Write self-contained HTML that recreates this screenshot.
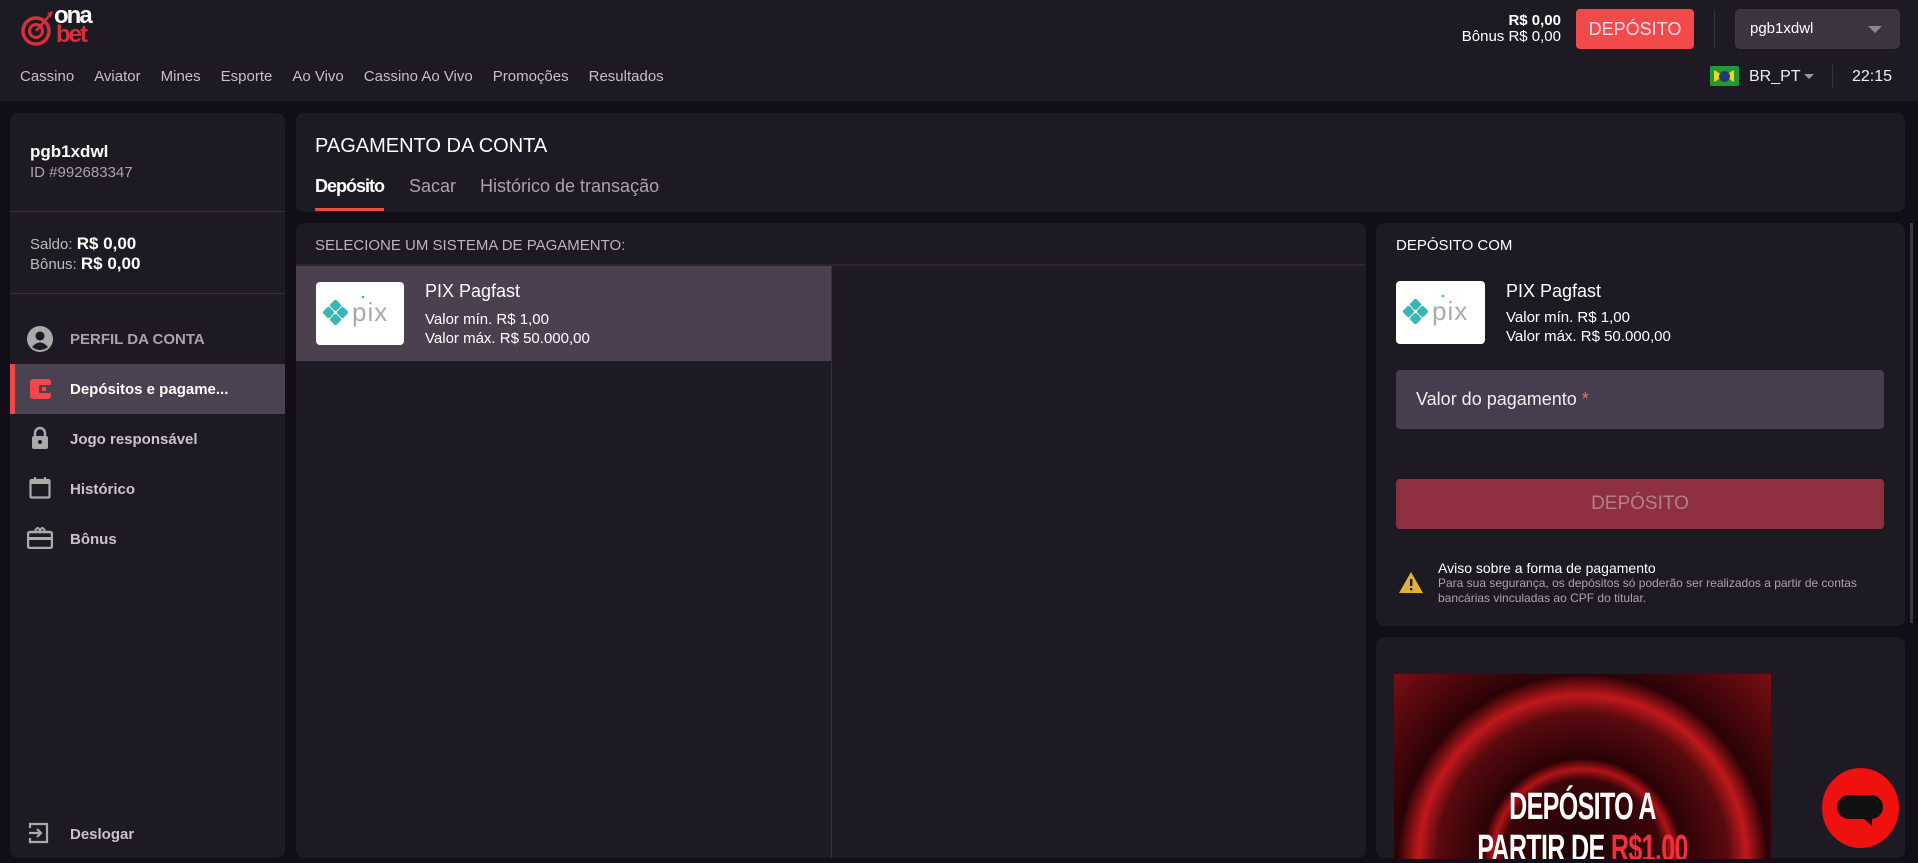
<!DOCTYPE html>
<html><head><meta charset="utf-8"><style>
*{box-sizing:border-box;margin:0;padding:0}
body{width:1918px;height:863px;overflow:hidden;background:#120e17;font-family:"Liberation Sans",sans-serif;color:#fff;position:relative}
.a{position:absolute}
.panel{position:absolute;background:#1e1a23;border-radius:8px}
.nav span{margin-right:20px}
.pix{position:absolute;background:#fff;border-radius:4px}
</style></head><body>
<div class="a" style="left:0;top:0;width:1918px;height:101px;background:#1e1a23"></div>
<svg class="a" style="left:18px;top:9px" width="42" height="38" viewBox="0 0 42 38">
<circle cx="18" cy="22" r="13" fill="none" stroke="#d6313b" stroke-width="3.5"/>
<circle cx="18" cy="22" r="6.5" fill="none" stroke="#d6313b" stroke-width="3"/>
<path d="M18 22 L32 6" stroke="#d6313b" stroke-width="2.5"/><path d="M29 4 l6 -2 l-2 6z" fill="#d6313b"/>
</svg>
<div class="a" style="left:54px;top:6px;font-size:24px;font-weight:bold;letter-spacing:-2px;line-height:20px;color:#fff">ona</div>
<div class="a" style="left:56px;top:25px;font-size:24px;font-weight:bold;letter-spacing:-2px;line-height:20px;color:#d6313b">bet</div>
<div class="a nav" style="left:20px;top:68px;font-size:15px;color:#c4bfc8;white-space:nowrap">
<span>Cassino</span><span>Aviator</span><span>Mines</span><span>Esporte</span><span>Ao Vivo</span><span>Cassino Ao Vivo</span><span>Promoções</span><span>Resultados</span></div>
<div class="a" style="right:357px;top:13px;text-align:right;font-size:15px;line-height:16px"><b>R$ 0,00</b><br>Bônus R$ 0,00</div>
<div class="a" style="left:1576px;top:9px;width:118px;height:40px;background:#f24a4a;border-radius:4px;font-size:18px;text-align:center;line-height:40px;color:#fde">DEPÓSITO</div>
<div class="a" style="left:1714px;top:10px;width:1px;height:38px;background:#333"></div>
<div class="a" style="left:1735px;top:9px;width:165px;height:40px;background:#3b3541;border-radius:5px;font-size:15px;line-height:40px;padding-left:15px">pgb1xdwl</div>
<div class="a" style="left:1868px;top:26px;border:7px solid transparent;border-top:7px solid #8d8794;border-bottom:0"></div>
<div class="a" style="left:1710px;top:66px;width:29px;height:20px;background:#1f9a37;border-radius:2px"></div>
<div class="a" style="left:1714px;top:70px;width:0;height:0;border:10px solid transparent;border-top:6px solid transparent;border-bottom:6px solid transparent;border-left:10px solid #f4d51c;border-right:10px solid #f4d51c"></div>
<div class="a" style="left:1719px;top:71px;width:11px;height:11px;border-radius:50%;background:#223a7a"></div>
<div class="a" style="left:1749px;top:68px;font-size:16px;color:#eee">BR_PT</div>
<div class="a" style="left:1804px;top:74px;border:5px solid transparent;border-top:5px solid #999;border-bottom:0"></div>
<div class="a" style="left:1832px;top:65px;width:1px;height:24px;background:#333"></div>
<div class="a" style="left:1852px;top:68px;font-size:16px;color:#eee">22:15</div>

<div class="panel" style="left:10px;top:113px;width:275px;height:745px"></div>
<div class="a" style="left:30px;top:142px;font-size:17px;font-weight:bold">pgb1xdwl</div>
<div class="a" style="left:30px;top:164px;font-size:15px;color:#aaa3ae">ID #992683347</div>
<div class="a" style="left:10px;top:211px;width:275px;height:1px;background:#35303a"></div>
<div class="a" style="left:30px;top:234px;font-size:15px;color:#bbb"><span>Saldo:</span> <b style="color:#fff;font-size:17px">R$ 0,00</b></div>
<div class="a" style="left:30px;top:254px;font-size:15px;color:#bbb"><span>Bônus:</span> <b style="color:#fff;font-size:17px">R$ 0,00</b></div>
<div class="a" style="left:10px;top:293px;width:275px;height:1px;background:#35303a"></div>
<svg class="a" style="left:27px;top:326px" width="26" height="26" viewBox="0 0 26 26"><circle cx="13" cy="13" r="13" fill="#aaa"/><circle cx="13" cy="10" r="4.5" fill="#1e1a23"/><path d="M5 21 q8-9 16 0 q-8 6 -16 0z" fill="#1e1a23"/></svg>
<div class="a" style="left:70px;top:331px;font-size:15px;font-weight:bold;color:#aaa3ae">PERFIL DA CONTA</div>
<div class="a" style="left:10px;top:364px;width:275px;height:50px;background:#4a4250"></div>
<div class="a" style="left:10px;top:364px;width:5px;height:50px;background:#f04848"></div>
<svg class="a" style="left:30px;top:379px" width="22" height="20" viewBox="0 0 22 20"><rect x="0" y="0" width="21" height="20" rx="3" fill="#f04848"/><rect x="9" y="6" width="12" height="8" rx="1" fill="#4a4250"/><rect x="12" y="8" width="4" height="4" fill="#f04848"/></svg>
<div class="a" style="left:70px;top:381px;font-size:15px;font-weight:bold">Depósitos e pagame...</div>
<svg class="a" style="left:31px;top:426px" width="18" height="24" viewBox="0 0 18 24"><path d="M4 10V7a5 5 0 0110 0v3" fill="none" stroke="#aaa" stroke-width="2.4"/><rect x="1" y="10" width="16" height="13" rx="2" fill="#aaa"/><circle cx="9" cy="16" r="2" fill="#1e1a23"/></svg>
<div class="a" style="left:70px;top:431px;font-size:15px;font-weight:bold;color:#c9c3cc">Jogo responsável</div>
<svg class="a" style="left:29px;top:477px" width="22" height="22" viewBox="0 0 22 22"><rect x="1.5" y="3" width="19" height="17.5" rx="1" fill="none" stroke="#aaa" stroke-width="2.2"/><rect x="1" y="3" width="20" height="4" fill="#aaa"/><rect x="5" y="0" width="2" height="4" fill="#aaa"/><rect x="15" y="0" width="2" height="4" fill="#aaa"/></svg>
<div class="a" style="left:70px;top:481px;font-size:15px;font-weight:bold;color:#c9c3cc">Histórico</div>
<svg class="a" style="left:27px;top:525px" width="26" height="24" viewBox="0 0 26 24"><rect x="1" y="7" width="24" height="16" rx="2" fill="none" stroke="#aaa" stroke-width="2.4"/><rect x="1" y="12" width="24" height="3" fill="#aaa"/><path d="M8 6 q3-6 5 0 q2-6 5 0" fill="none" stroke="#aaa" stroke-width="2"/></svg>
<div class="a" style="left:70px;top:531px;font-size:15px;font-weight:bold;color:#c9c3cc">Bônus</div>
<svg class="a" style="left:28px;top:821px" width="22" height="24" viewBox="0 0 22 24"><path d="M2 7V3h17v18H2v-4" fill="none" stroke="#aaa" stroke-width="2.2"/><path d="M1 12h12M9 8l4 4-4 4" fill="none" stroke="#aaa" stroke-width="2.2"/></svg>
<div class="a" style="left:70px;top:826px;font-size:15px;font-weight:bold;color:#c9c3cc">Deslogar</div>

<div class="panel" style="left:296px;top:113px;width:1609px;height:99px"></div>
<div class="a" style="left:315px;top:135px;font-size:20px">PAGAMENTO DA CONTA</div>
<div class="a" style="left:315px;top:176px;font-size:18px;font-weight:bold;letter-spacing:-1px">Depósito</div>
<div class="a" style="left:409px;top:176px;font-size:18px;color:#aaa3ae">Sacar</div>
<div class="a" style="left:480px;top:176px;font-size:18px;color:#aaa3ae">Histórico de transação</div>
<div class="a" style="left:315px;top:208px;width:69px;height:3px;background:#f04848"></div>

<div class="panel" style="left:296px;top:223px;width:1070px;height:635px"></div>
<div class="a" style="left:315px;top:237px;font-size:15px;color:#bbb4c0">SELECIONE UM SISTEMA DE PAGAMENTO:</div>
<div class="a" style="left:296px;top:264px;width:1070px;height:2px;background:#2a2530"></div>
<div class="a" style="left:296px;top:266px;width:535px;height:95px;background:#4a4050"></div>
<div class="a" style="left:831px;top:266px;width:1px;height:592px;background:#35303a"></div>
<div class="pix" style="left:316px;top:282px;width:88px;height:63px">
<svg width="88" height="63" viewBox="0 0 88 63"><g fill="#39b6b2"><rect x="8" y="26" width="9" height="9" rx="2" transform="rotate(45 12.5 30.5)"/><rect x="15" y="19" width="9" height="9" rx="2" transform="rotate(45 19.5 23.5)"/><rect x="15" y="33" width="9" height="9" rx="2" transform="rotate(45 19.5 37.5)"/><rect x="22" y="26" width="9" height="9" rx="2" transform="rotate(45 26.5 30.5)"/></g><text x="36" y="39" font-size="26" fill="#aaa" font-family="Liberation Sans" font-weight="normal" letter-spacing="1">pix</text><circle cx="47" cy="15" r="1.3" fill="#39b6b2"/></svg></div>
<div class="a" style="left:425px;top:281px;font-size:18px">PIX Pagfast</div>
<div class="a" style="left:425px;top:310px;font-size:15px;line-height:19px">Valor mín. R$ 1,00<br>Valor máx. R$ 50.000,00</div>

<div class="panel" style="left:1376px;top:223px;width:529px;height:403px"></div>
<div class="a" style="left:1396px;top:237px;font-size:15px">DEPÓSITO COM</div>
<div class="pix" style="left:1396px;top:281px;width:89px;height:63px">
<svg width="88" height="63" viewBox="0 0 88 63"><g fill="#39b6b2"><rect x="8" y="26" width="9" height="9" rx="2" transform="rotate(45 12.5 30.5)"/><rect x="15" y="19" width="9" height="9" rx="2" transform="rotate(45 19.5 23.5)"/><rect x="15" y="33" width="9" height="9" rx="2" transform="rotate(45 19.5 37.5)"/><rect x="22" y="26" width="9" height="9" rx="2" transform="rotate(45 26.5 30.5)"/></g><text x="36" y="39" font-size="26" fill="#aaa" font-family="Liberation Sans" letter-spacing="1">pix</text><circle cx="47" cy="15" r="1.3" fill="#39b6b2"/></svg></div>
<div class="a" style="left:1506px;top:281px;font-size:18px">PIX Pagfast</div>
<div class="a" style="left:1506px;top:308px;font-size:15px;line-height:19px">Valor mín. R$ 1,00<br>Valor máx. R$ 50.000,00</div>
<div class="a" style="left:1396px;top:370px;width:488px;height:59px;background:#463e4e;border-radius:4px;font-size:18px;padding:19px 0 0 20px;color:#eee">Valor do pagamento <span style="color:#e56b6b">*</span></div>
<div class="a" style="left:1396px;top:479px;width:488px;height:50px;background:#8f3040;border-radius:4px;font-size:19px;text-align:center;line-height:50px;color:#b47f88">DEPÓSITO</div>
<svg class="a" style="left:1399px;top:572px" width="24" height="21" viewBox="0 0 24 21"><path d="M12 0 L24 21 H0z" fill="#e3b13a"/><rect x="11" y="7" width="2.4" height="7" fill="#1e1a23"/><rect x="11" y="16" width="2.4" height="2.4" fill="#1e1a23"/></svg>
<div class="a" style="left:1438px;top:560px;font-size:14px;color:#fff">Aviso sobre a forma de pagamento</div>
<div class="a" style="left:1438px;top:576px;font-size:12px;line-height:15px;color:#aaa3ae;width:460px">Para sua segurança, os depósitos só poderão ser realizados a partir de contas bancárias vinculadas ao CPF do titular.</div>

<div class="panel" style="left:1376px;top:637px;width:529px;height:221px"></div>
<div class="a" style="left:1394px;top:674px;width:377px;height:185px;overflow:hidden;background:radial-gradient(circle at 50% 100%,#1a0204 0,#3a0508 30%,#b01318 34%,#2a0306 38%,#5a0a0e 55%,#c0181c 62%,#2a0306 70%,#7a0e12 100%)">
<div style="position:absolute;left:0;top:112px;width:377px;text-align:center;font-size:38px;font-weight:bold;line-height:42px;transform:scaleX(0.66);letter-spacing:-1px">DEPÓSITO A<br>PARTIR DE <span style="color:#f03040">R$1.00</span></div></div>
<div class="a" style="left:1910px;top:223px;width:3px;height:400px;background:#3a3540"></div>
<div class="a" style="left:1822px;top:768px;width:77px;height:80px;border-radius:50%;background:#ef1010"></div>
<div class="a" style="left:1837px;top:795px;width:46px;height:24px;border-radius:12px;background:#111"></div>
<div class="a" style="left:1862px;top:817px;border-left:10px solid transparent;border-top:9px solid #111"></div>
</body></html>
